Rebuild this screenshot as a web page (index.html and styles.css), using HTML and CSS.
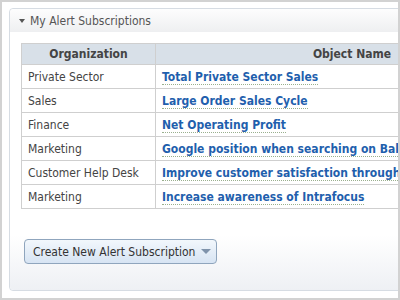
FILE: index.html
```html
<!DOCTYPE html>
<html lang="en">
<head>
  <meta charset="UTF-8">
  <title>My Alert Subscriptions</title>
  <link rel="stylesheet" href="styles.css">
</head>
<body>
  <div class="frame">
    <div class="panel">
      <div class="panel-header">
        <span class="caret"></span>
        <span class="panel-title">My Alert Subscriptions</span>
      </div>
      <div class="panel-body">
        <table class="alerts">
          <thead>
            <tr>
              <th class="col-org">Organization</th>
              <th class="col-name">Object Name</th>
            </tr>
          </thead>
          <tbody>
            <tr><td>Private Sector</td><td><a href="#">Total Private Sector Sales</a></td></tr>
            <tr><td>Sales</td><td><a href="#">Large Order Sales Cycle</a></td></tr>
            <tr><td>Finance</td><td><a href="#">Net Operating Profit</a></td></tr>
            <tr><td>Marketing</td><td><a href="#">Google position when searching on Balanced Scorecard</a></td></tr>
            <tr><td>Customer Help Desk</td><td><a href="#">Improve customer satisfaction through support</a></td></tr>
            <tr><td>Marketing</td><td><a href="#">Increase awareness of Intrafocus</a></td></tr>
          </tbody>
        </table>
        <button class="create-btn">Create New Alert Subscription <span class="btn-caret"></span></button>
      </div>
    </div>
  </div>
</body>
</html>
```

FILE: styles.css
```css
body, html {
  margin: 0;
  padding: 0;
  background-color: #fff;
  font-family: "DejaVu Sans Condensed", "DejaVu Sans", sans-serif;
  font-size: 12px;
}

.frame {
  box-sizing: border-box;
  width: 400px;
  height: 300px;
  border: 2px solid #d2d2d2;
  padding: 6px 0 7px 7px;
  overflow: hidden;
}

.panel {
  box-sizing: border-box;
  width: 620px;
  height: 283px;
  border: 1px solid #d6dce3;
  border-radius: 4px;
  display: flex;
  flex-direction: column;
}

.panel-header {
  height: 23px;
  display: flex;
  align-items: center;
  padding-left: 9px;
  background: linear-gradient(#fdfdfd, #eeeff1);
  border-radius: 4px 4px 0 0;
}

.caret {
  width: 0;
  height: 0;
  border-left: 3px solid transparent;
  border-right: 3px solid transparent;
  border-top: 4px solid #555;
  margin-right: 5px;
}

.panel-title {
  color: #555;
  font-size: 12px;
}

.panel-body {
  flex: 1;
  padding: 11px 0 0 11px;
  background: linear-gradient(#fff calc(100% - 55px), #eef0f4);
  border-radius: 0 0 4px 4px;
}

.alerts {
  border-collapse: collapse;
  border: 1px solid #cfcfcf;
}

.alerts th {
  background-color: #d8e0e8;
  color: #444;
  font-weight: bold;
  height: 20px;
  padding: 0;
  border: 1px solid #cfcfcf;
  border-top: none;
}

.col-org {
  width: 133px;
}

.col-name {
  width: 392px;
}

.alerts td {
  height: 23px;
  padding: 0 6px;
  border: 1px solid #cfcfcf;
  color: #444;
  white-space: nowrap;
}

.alerts a {
  color: #1f5fad;
  font-weight: bold;
  text-decoration: none;
  border-bottom: 1px dotted #9ab08e;
}

.create-btn {
  margin: 30px 0 0 3px;
  height: 25px;
  width: 193px;
  padding: 0 0 0 8px;
  font-family: inherit;
  font-size: 12px;
  color: #333;
  white-space: nowrap;
  border: 1px solid #8fa5bd;
  border-radius: 4px;
  background: linear-gradient(#f2f7fc, #d7e4f3);
  display: flex;
  align-items: center;
}

.btn-caret {
  width: 0;
  height: 0;
  border-left: 5px solid transparent;
  border-right: 5px solid transparent;
  border-top: 5px solid #7f93ab;
  margin-left: 6px;
}
```
